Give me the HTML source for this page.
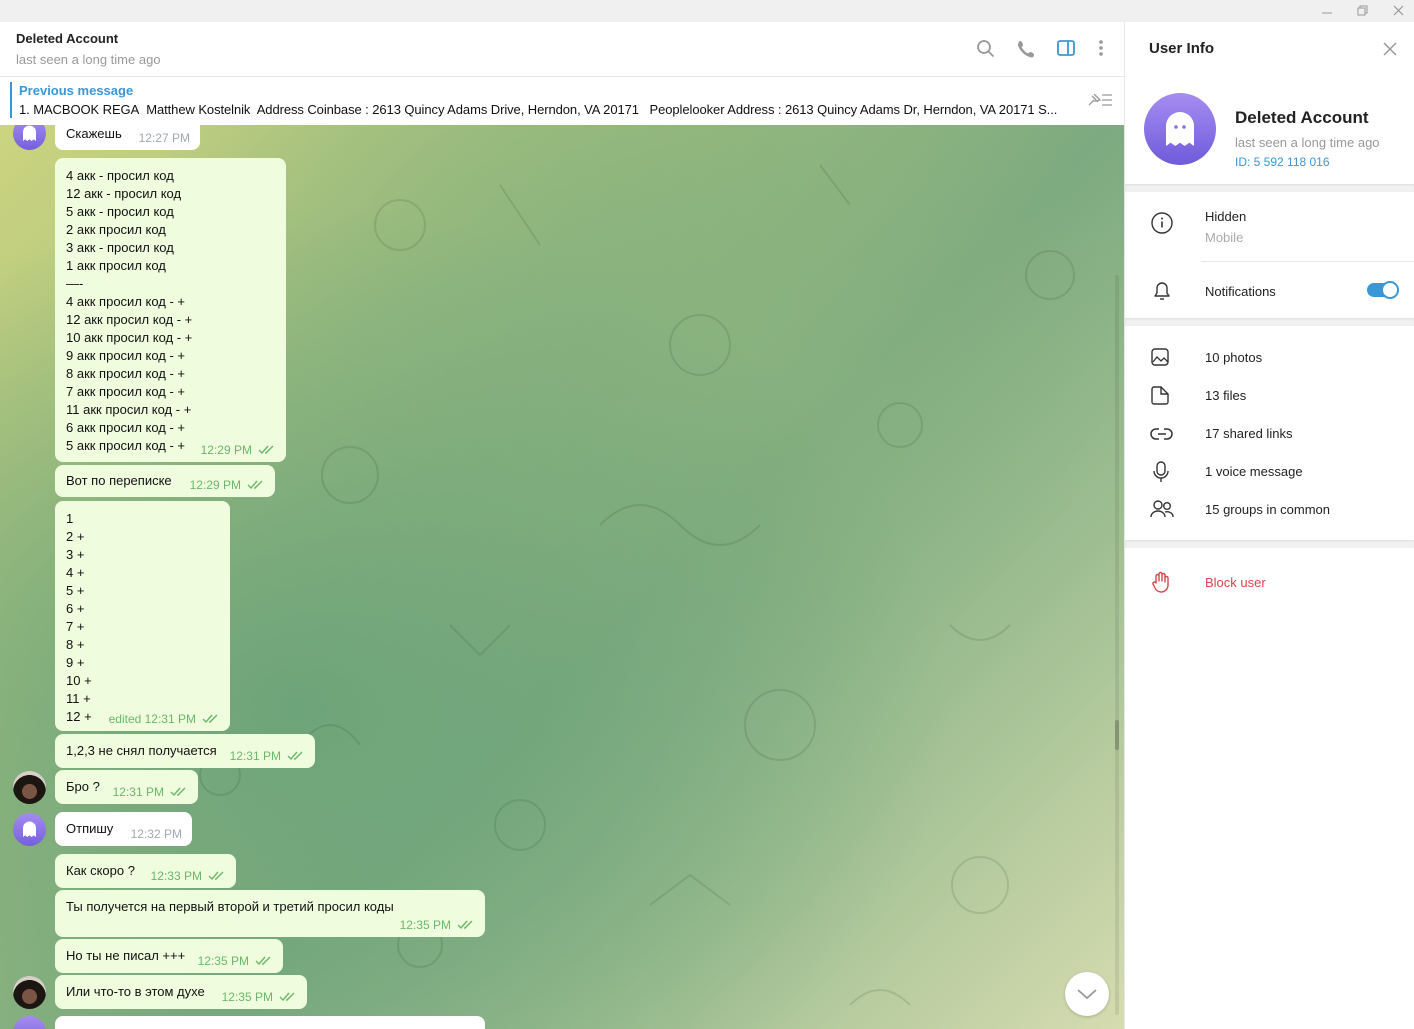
<!DOCTYPE html>
<html><head><meta charset="utf-8"><style>
*{margin:0;padding:0;box-sizing:border-box}
body{width:1414px;height:1029px;overflow:hidden;font-family:"Liberation Sans","DejaVu Sans",sans-serif;font-size:13px;color:#000;background:#fff;position:relative}
.tb{position:absolute;left:0;top:0;width:1414px;height:22px;background:#f0f0f0}
.hdr{position:absolute;left:0;top:22px;width:1124px;height:55px;background:#fff;border-bottom:1px solid #e7e7e7}
.pin{position:absolute;left:0;top:77px;width:1124px;height:48px;background:#fff}
.chat{position:absolute;left:0;top:125px;width:1124px;height:904px;overflow:hidden;
background:radial-gradient(ellipse 650px 500px at 300px 580px,#6ea47a 0%,rgba(110,164,122,0) 100%),
radial-gradient(ellipse 500px 420px at 620px 200px,#89b27e 0%,rgba(137,178,126,0) 100%),
linear-gradient(135deg,#ccd47f 0%,#a0bf7f 30%,#7daa80 55%,#9fbf92 75%,#d6dcb0 100%)}
.b{position:absolute;left:55px;background:#effdde;border-radius:8px;padding:9px 11px 0 11px;line-height:18px;font-size:13px;color:#111}
.b.in{background:#fff}
.t{position:absolute;right:10px;bottom:3px;font-size:12px;color:#6cb66a;white-space:nowrap}
.in .t{color:#a0a8ae}
.ck{display:inline-block;width:18px;height:10px;margin-left:6px;vertical-align:-1px}
.av{position:absolute;left:13px;width:33px;height:33px;border-radius:50%;background:linear-gradient(#a58cf0,#7460dc);overflow:hidden}
.ph{background:radial-gradient(circle at 50% 62%,#7a5444 0 28%,#1c1612 29% 62%,#d8cfc8 63%)}
.rp{position:absolute;left:1124px;top:22px;width:290px;height:1007px;background:#fff;border-left:1px solid #e7e7e7}
.gap{position:absolute;left:0;width:290px;height:8px;background:#f1f1f1;box-shadow:inset 0 1px 2px rgba(0,0,0,.08)}
.ri{position:absolute;left:80px;font-size:13px;color:#222}
.ic{position:absolute;left:25px}
</style></head><body>
<div class="tb">
<svg style="position:absolute;left:1320px;top:5px" width="94" height="12"><path d="M2 8h10" stroke="#999" stroke-width="1"/><rect x="38" y="3" width="7" height="7" fill="none" stroke="#999"/><path d="M40 3V1h7v7h-2" fill="none" stroke="#999"/><path d="M74 1l9 9M83 1l-9 9" stroke="#999" stroke-width="1.2"/></svg>
</div>
<div class="hdr">
<div style="position:absolute;left:16px;top:9px;font-size:13px;font-weight:bold;color:#222">Deleted Account</div>
<div style="position:absolute;left:16px;top:30px;font-size:13px;color:#999">last seen a long time ago</div>
<svg style="position:absolute;left:975px;top:16px" width="140" height="24">
<circle cx="9" cy="9" r="6" fill="none" stroke="#999" stroke-width="1.8"/><path d="M13.5 13.5l5 5" stroke="#999" stroke-width="1.8"/>
<path d="M45 3c2 0 3 3 3 4s-2 2-1 3 3 4 5 5 2-1 3-1 4 1 4 3-2 3-4 2c-5-1-11-7-12-12 0-2 1-4 2-4z" fill="#999"/>
<rect x="83" y="3" width="16" height="14" rx="2" fill="none" stroke="#3a97d6" stroke-width="1.8"/><path d="M93 3v14" stroke="#3a97d6" stroke-width="1.8"/>
<circle cx="126" cy="4" r="1.8" fill="#999"/><circle cx="126" cy="10" r="1.8" fill="#999"/><circle cx="126" cy="16" r="1.8" fill="#999"/>
</svg>
</div>
<div class="pin">
<div style="position:absolute;left:10px;top:5px;width:2px;height:36px;background:#3a97d6"></div>
<div style="position:absolute;left:19px;top:6px;font-size:13px;color:#3a97d6;font-weight:bold">Previous message</div>
<div style="position:absolute;left:19px;top:25px;font-size:13px;color:#111;white-space:nowrap;letter-spacing:-0.08px">1. MACBOOK REGA&nbsp; Matthew Kostelnik&nbsp; Address Coinbase : 2613 Quincy Adams Drive, Herndon, VA 20171&nbsp;&nbsp; Peoplelooker Address : 2613 Quincy Adams Dr, Herndon, VA 20171 S...</div>
<svg style="position:absolute;left:1086px;top:14px" width="28" height="18"><path d="M3 14l5-5M6 5l6 6M8 3l6 6-3 1-4 0" fill="none" stroke="#999" stroke-width="1.3"/><path d="M16 4h10M16 9h10M16 14h10" stroke="#999" stroke-width="1.3"/></svg>
</div>
<div class="chat">
<svg style="position:absolute;left:0;top:0" width="1124" height="904" opacity="0.13">
<g fill="none" stroke="#1d3a1d" stroke-width="2">
<circle cx="400" cy="100" r="25"/><circle cx="700" cy="220" r="30"/><path d="M500 60l40 60M820 40l30 40"/><circle cx="900" cy="300" r="22"/><path d="M600 400q40-40 80 0t80 0"/><circle cx="350" cy="350" r="28"/><path d="M450 500l30 30 30-30"/><circle cx="780" cy="600" r="35"/><path d="M950 500q30 30 60 0"/><circle cx="520" cy="700" r="25"/><path d="M650 780l40-30 40 30"/><circle cx="980" cy="760" r="28"/><circle cx="420" cy="820" r="22"/><path d="M300 620q30-40 60 0"/><circle cx="1050" cy="150" r="24"/><circle cx="220" cy="650" r="20"/><path d="M850 880q30-30 60 0"/>
</g></svg>
<div style="position:absolute;left:1115px;top:150px;width:4px;height:740px;background:rgba(0,0,0,.08);border-radius:2px"></div>
<div style="position:absolute;left:1115px;top:595px;width:4px;height:30px;background:rgba(0,0,0,.2);border-radius:2px"></div>
<div class="av" style="top:-8px"><svg width="33" height="33"><path d="M10 24v-9a6.5 6.5 0 0 1 13 0v9l-2.2-1.6-2.2 1.6-2.1-1.6-2.1 1.6-2.2-1.6z" fill="#fff"/></svg></div>
<div class="b in" style="top:-6px;width:145px;height:31px;padding-top:6px">Скажешь<span class="t">12:27 PM</span></div>
<div class="b" style="top:33px;width:231px;height:304px">4 акк - просил код<br>12 акк - просил код<br>5 акк - просил код<br>2 акк просил код<br>3 акк - просил код<br>1 акк просил код<br>—-<br>4 акк просил код - +<br>12 акк просил код - +<br>10 акк просил код - +<br>9 акк просил код - +<br>8 акк просил код - +<br>7 акк просил код - +<br>11 акк просил код - +<br>6 акк просил код - +<br>5 акк просил код - +<span class="t">12:29 PM<svg class="ck"><path d="M1 5l3 3 6-7M7 8l1 0 7-7" fill="none" stroke="#6cb66a" stroke-width="1.4"/></svg></span></div>
<div class="b" style="top:340px;width:220px;height:32px;padding-top:7px">Вот по переписке<span class="t">12:29 PM<svg class="ck"><path d="M1 5l3 3 6-7M7 8l1 0 7-7" fill="none" stroke="#6cb66a" stroke-width="1.4"/></svg></span></div>
<div class="b" style="top:376px;width:175px;height:230px">1<br>2 +<br>3 +<br>4 +<br>5 +<br>6 +<br>7 +<br>8 +<br>9 +<br>10 +<br>11 +<br>12 +<span class="t">edited 12:31 PM<svg class="ck"><path d="M1 5l3 3 6-7M7 8l1 0 7-7" fill="none" stroke="#6cb66a" stroke-width="1.4"/></svg></span></div>
<div class="b" style="top:609px;width:260px;height:34px;padding-top:8px">1,2,3 не снял получается<span class="t">12:31 PM<svg class="ck"><path d="M1 5l3 3 6-7M7 8l1 0 7-7" fill="none" stroke="#6cb66a" stroke-width="1.4"/></svg></span></div>
<div class="av ph" style="top:646px"></div>
<div class="b" style="top:645px;width:143px;height:34px;padding-top:8px">Бро ?<span class="t">12:31 PM<svg class="ck"><path d="M1 5l3 3 6-7M7 8l1 0 7-7" fill="none" stroke="#6cb66a" stroke-width="1.4"/></svg></span></div>
<div class="av" style="top:688px"><svg width="33" height="33"><path d="M10 24v-9a6.5 6.5 0 0 1 13 0v9l-2.2-1.6-2.2 1.6-2.1-1.6-2.1 1.6-2.2-1.6z" fill="#fff"/></svg></div>
<div class="b in" style="top:687px;width:137px;height:34px;padding-top:8px">Отпишу<span class="t">12:32 PM</span></div>
<div class="b" style="top:729px;width:181px;height:34px;padding-top:8px">Как скоро ?<span class="t">12:33 PM<svg class="ck"><path d="M1 5l3 3 6-7M7 8l1 0 7-7" fill="none" stroke="#6cb66a" stroke-width="1.4"/></svg></span></div>
<div class="b" style="top:765px;width:430px;height:47px;padding-top:8px">Ты получется на первый второй и третий просил коды<span class="t">12:35 PM<svg class="ck"><path d="M1 5l3 3 6-7M7 8l1 0 7-7" fill="none" stroke="#6cb66a" stroke-width="1.4"/></svg></span></div>
<div class="b" style="top:814px;width:228px;height:34px;padding-top:8px">Но ты не писал +++<span class="t">12:35 PM<svg class="ck"><path d="M1 5l3 3 6-7M7 8l1 0 7-7" fill="none" stroke="#6cb66a" stroke-width="1.4"/></svg></span></div>
<div class="av ph" style="top:851px"></div>
<div class="b" style="top:850px;width:252px;height:34px;padding-top:8px">Или что-то в этом духе<span class="t">12:35 PM<svg class="ck"><path d="M1 5l3 3 6-7M7 8l1 0 7-7" fill="none" stroke="#6cb66a" stroke-width="1.4"/></svg></span></div>
<div class="av" style="top:891px"></div>
<div class="b in" style="top:891px;width:430px;height:30px"></div>
<div style="position:absolute;left:1065px;top:847px;width:44px;height:44px;border-radius:50%;background:#fff;box-shadow:0 1px 3px rgba(0,0,0,.2)"><svg width="44" height="44"><path d="M13 18l9 8 9-8" fill="none" stroke="#999" stroke-width="1.8"/></svg></div>
</div>
<div class="rp">
<div style="position:absolute;left:24px;top:18px;font-size:15px;font-weight:bold;color:#222">User Info</div>
<svg style="position:absolute;left:258px;top:20px" width="14" height="14"><path d="M1 1l12 12M13 1L1 13" stroke="#999" stroke-width="1.5"/></svg>
<div style="position:absolute;left:19px;top:71px;width:72px;height:72px;border-radius:50%;background:linear-gradient(#a68df2,#6f5bda)"><svg width="72" height="72"><path d="M22 53V33a14 14 0 0 1 28 0v20l-4.7-3.3-4.6 3.3-4.7-3.3-4.7 3.3-4.6-3.3z" fill="#fff"/><circle cx="32" cy="34" r="1.8" fill="#8a72e6"/><circle cx="40" cy="34" r="1.8" fill="#8a72e6"/></svg></div>
<div style="position:absolute;left:110px;top:86px;font-size:17px;font-weight:bold;color:#222">Deleted Account</div>
<div style="position:absolute;left:110px;top:113px;font-size:13px;color:#999">last seen a long time ago</div>
<div style="position:absolute;left:110px;top:133px;font-size:12px;color:#3a97d6">ID: 5 592 118 016</div>
<div class="gap" style="top:162px"></div>
<svg class="ic" style="top:189px" width="24" height="24"><circle cx="12" cy="12" r="10" fill="none" stroke="#333" stroke-width="1.4"/><path d="M12 10.5v6" stroke="#333" stroke-width="1.6"/><circle cx="12" cy="7.5" r="1" fill="#333"/></svg>
<div class="ri" style="top:187px">Hidden</div>
<div class="ri" style="top:208px;color:#aaa">Mobile</div>
<div style="position:absolute;left:76px;top:239px;width:214px;height:1px;background:#e7e7e7"></div>
<svg class="ic" style="top:257px" width="24" height="24"><path d="M5 17h14l-2-3v-5a5 5 0 0 0-10 0v5z" fill="none" stroke="#333" stroke-width="1.4" stroke-linejoin="round"/><path d="M10 20h4" stroke="#333" stroke-width="1.4"/></svg>
<div class="ri" style="top:262px">Notifications</div>
<div style="position:absolute;left:242px;top:261px;width:30px;height:14px;border-radius:7px;background:#3a97d6"></div>
<div style="position:absolute;left:256px;top:259px;width:18px;height:18px;border-radius:50%;background:#fff;border:2px solid #3a97d6"></div>
<div class="gap" style="top:296px"></div>
<svg class="ic" style="top:325px" width="22" height="22"><rect x="2" y="2" width="16" height="16" rx="3" fill="none" stroke="#333" stroke-width="1.4"/><path d="M3 15l4-5 4 4 3-3 4 4" fill="none" stroke="#333" stroke-width="1.3"/></svg>
<div class="ri" style="top:328px">10 photos</div>
<svg class="ic" style="top:363px" width="22" height="22"><path d="M4 2h7l7 7v8a2 2 0 0 1-2 2H4a2 2 0 0 1-2-2V4a2 2 0 0 1 2-2z" fill="none" stroke="#333" stroke-width="1.4"/><path d="M11 2v7h7" fill="none" stroke="#333" stroke-width="1.4"/></svg>
<div class="ri" style="top:366px">13 files</div>
<svg class="ic" style="top:401px" width="24" height="22"><path d="M9 6H6a5 5 0 0 0 0 10h3M14 6h3a5 5 0 0 1 0 10h-3M8 11h8" fill="none" stroke="#333" stroke-width="1.5"/></svg>
<div class="ri" style="top:404px">17 shared links</div>
<svg class="ic" style="top:438px" width="22" height="24"><rect x="7" y="2" width="8" height="13" rx="4" fill="none" stroke="#333" stroke-width="1.4"/><path d="M4 11a7 7 0 0 0 14 0M11 18v4" fill="none" stroke="#333" stroke-width="1.4"/></svg>
<div class="ri" style="top:442px">1 voice message</div>
<svg class="ic" style="top:476px" width="26" height="22"><circle cx="8" cy="7" r="4" fill="none" stroke="#333" stroke-width="1.4"/><circle cx="17" cy="8" r="3.3" fill="none" stroke="#333" stroke-width="1.4"/><path d="M1 19a7 6 0 0 1 14 0M15 14a6 5 0 0 1 8 5" fill="none" stroke="#333" stroke-width="1.4"/></svg>
<div class="ri" style="top:480px">15 groups in common</div>
<div class="gap" style="top:518px"></div>
<svg class="ic" style="top:548px" width="22" height="24"><path d="M6 13V6a1.5 1.5 0 0 1 3 0v5V4a1.5 1.5 0 0 1 3 0v7V5a1.5 1.5 0 0 1 3 0v7-4a1.5 1.5 0 0 1 3 0v7a7 7 0 0 1-7 7 7 7 0 0 1-6-4l-2-4a1.5 1.5 0 0 1 2.5-1.5z" fill="none" stroke="#d9444a" stroke-width="1.4" stroke-linejoin="round"/></svg>
<div class="ri" style="top:553px;color:#d9444a">Block user</div>
</div>
</body></html>
